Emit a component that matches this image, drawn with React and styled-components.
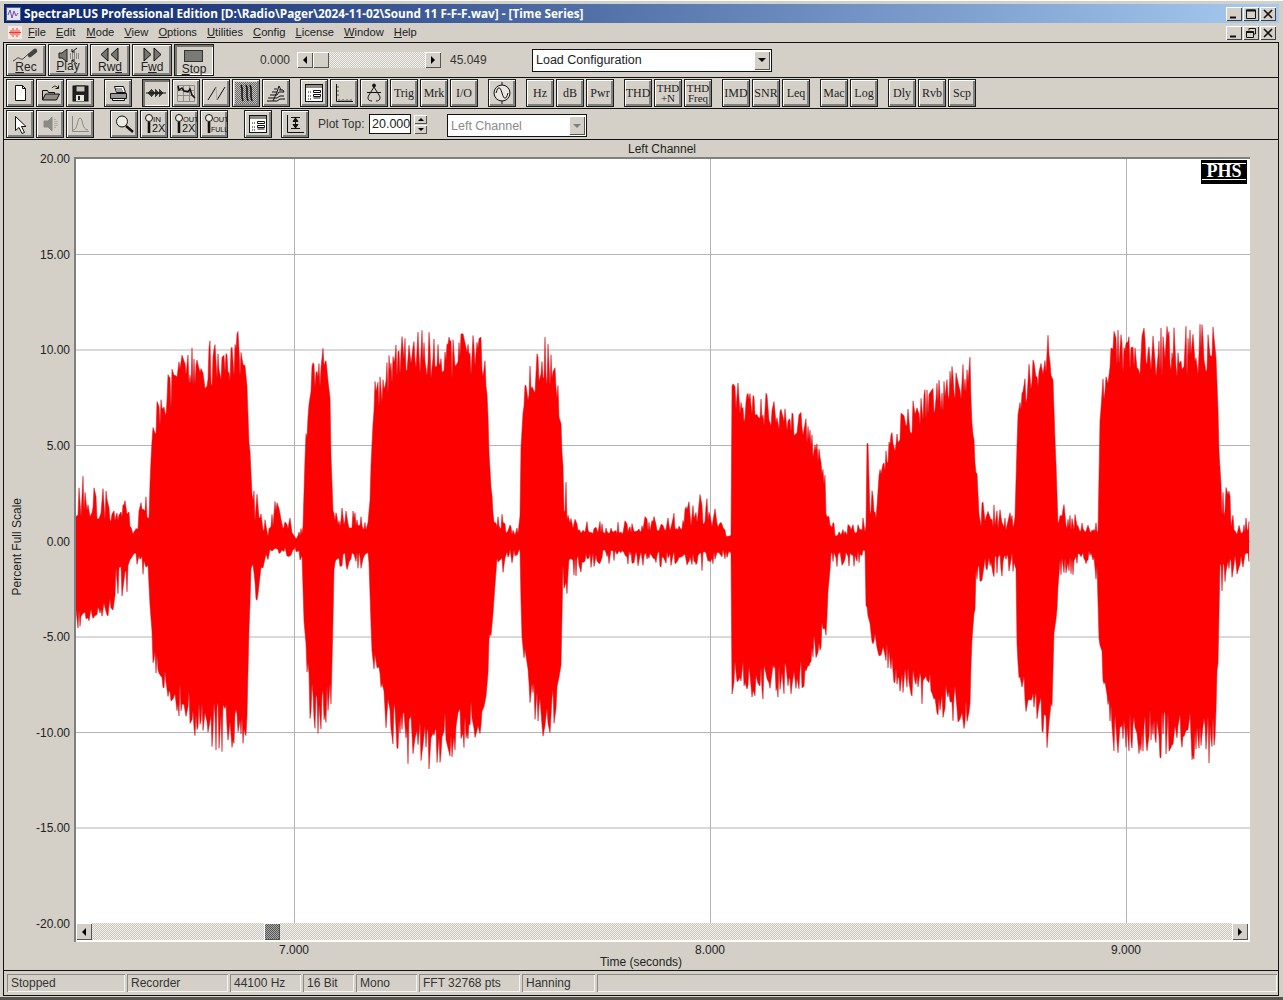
import React from "react";
import styled, { createGlobalStyle } from "styled-components";

const FACE = "#d4d0c8";
const DITHER = `repeating-conic-gradient(#f4f3f0 0 25%, #c8c4bc 0 50%) 0 0 / 2px 2px`;

const GlobalStyle = createGlobalStyle`
  html, body { margin: 0; padding: 0; background: ${FACE}; }
  body { font-family: "Liberation Sans", Arial, sans-serif; font-size: 12px; color: #111; }
`;

const Window = styled.div`
  width: 1283px;
  height: 1000px;
  box-sizing: border-box;
  padding: 4px 4px 0 3px;
  background: ${FACE};
  overflow: hidden;
  display: flex;
  flex-direction: column;
  box-shadow: inset 0 1px 0 #fff, inset 0 -3px 0 #55534e;
`;

const TitleBar = styled.div`
  height: 19px;
  margin-left: 1px;
  flex: none;
  display: flex;
  align-items: center;
  padding: 0 3px 0 2px;
  color: #fff;
  font-family: "Open Sans", sans-serif;
  font-weight: 700;
  font-size: 11.78px;
  white-space: nowrap;
  background: linear-gradient(90deg, #0a246a, #a6caf0);
`;

const TitleText = styled.span`
  margin: 0 0 2px 3px;
  flex: 1;
`;

const MenuBar = styled.div`
  height: 19px;
  flex: none;
  display: flex;
  align-items: center;
  padding: 0 3px 0 5px;
  font-size: 11.2px;
  color: #222;
`;

const MenuItem = styled.span`
  margin: 0 0 2px ${(p) => p.$gap}px;
  white-space: nowrap;
`;

const CaptionButtons = styled.div`
  display: flex;
  margin-left: auto;
  gap: ${(p) => p.$gap || 1}px;
`;

const CaptionButton = styled.div`
  width: 16px;
  height: 14px;
  box-sizing: border-box;
  background: ${FACE};
  box-shadow: inset 1px 1px 0 #fff, inset -1px -1px 0 #404040;
  display: flex;
  align-items: center;
  justify-content: center;
`;

const Frame = styled.div`
  flex: none;
  height: 954px;
  box-sizing: border-box;
  border: 1px solid #111;
  display: flex;
  flex-direction: column;
`;

const Toolbar = styled.div`
  flex: none;
  box-sizing: border-box;
  border-bottom: 1px solid #111;
  height: ${(p) => (p.$h || 30) + 1}px;
  padding-left: 2px;
  display: flex;
  align-items: center;
`;

const Group = styled.div`
  display: flex;
  gap: 2px;
  margin-left: ${(p) => p.$ml || 0}px;
`;

const Button = styled.div`
  width: ${(p) => p.$w || 28}px;
  height: ${(p) => p.$hh || 28}px;
  box-sizing: border-box;
  padding-top: ${(p) => p.$pt || 0}px;
  border: 1px solid #1c1c1c;
  background: ${FACE};
  box-shadow: ${(p) =>
    p.$pressed
      ? "inset 2px 2px 0 #77756f, inset -1px -1px 0 #fff"
      : "inset 1px 1px 0 #fff, inset -2px -2px 0 #808080"};
  display: flex;
  flex-direction: column;
  align-items: center;
  justify-content: center;
  flex: none;
  overflow: hidden;
`;

const TransportLabel = styled.span`
  font-size: 12px;
  line-height: 12px;
  margin-top: ${(p) => p.$mt ?? -1}px;
  color: #222;
`;

const SerifLabel = styled.span`
  font-family: "Liberation Serif", serif;
  font-size: ${(p) => (p.$small ? 11 : 12)}px;
  line-height: ${(p) => (p.$small ? 10 : 14)}px;
  text-align: center;
  white-space: pre-line;
  color: #222;
`;

const Readout = styled.span`
  width: ${(p) => p.$w}px;
  margin-left: ${(p) => p.$ml}px;
  text-align: ${(p) => (p.$right ? "right" : "left")};
  color: #333;
  flex: none;
`;

const HScroll = styled.div`
  width: ${(p) => p.$w}px;
  height: ${(p) => p.$h || 16}px;
  margin-left: ${(p) => p.$ml || 0}px;
  flex: none;
  display: flex;
  background: ${DITHER};
`;

const ScrollButton = styled.div`
  width: 16px;
  height: 100%;
  flex: none;
  box-sizing: border-box;
  background: ${FACE};
  box-shadow: inset 1px 1px 0 #fff, inset -1px -1px 0 #555;
  display: flex;
  align-items: center;
  justify-content: center;
`;

const Thumb = styled(ScrollButton)`
  margin-left: ${(p) => p.$ml || 0}px;
  margin-right: auto;
  background: ${(p) => (p.$dark ? "repeating-conic-gradient(#555 0 25%, #aaa 0 50%) 0 0 / 2px 2px" : FACE)};
`;

const ArrowLeft = styled.i`
  width: 0;
  height: 0;
  border: 4px solid transparent;
  border-left: 0;
  border-right: 4px solid #000;
`;

const ArrowRight = styled.i`
  width: 0;
  height: 0;
  border: 4px solid transparent;
  border-right: 0;
  border-left: 4px solid #000;
`;

const ArrowDown = styled.i`
  width: 0;
  height: 0;
  border: ${(p) => p.$size || 4}px solid transparent;
  border-bottom: 0;
  border-top: ${(p) => p.$size || 4}px solid ${(p) => p.$color || "#000"};
`;

const ArrowUp = styled(ArrowDown)`
  border-top: 0;
  border-bottom: 3px solid #000;
`;

const Combo = styled.div`
  width: ${(p) => p.$w}px;
  height: 23px;
  margin-left: ${(p) => p.$ml || 0}px;
  margin-top: ${(p) => p.$mt || 0}px;
  box-sizing: border-box;
  flex: none;
  border: 1px solid #111;
  background: #fff;
  display: flex;
  align-items: center;
  justify-content: space-between;
  padding: 1px 1px 1px 3px;
  font-size: 12.5px;
  color: ${(p) => (p.$disabled ? "#8a8a8a" : "#222")};
`;

const ComboButton = styled(ScrollButton)`
  height: 19px;
`;

const FieldLabel = styled.span`
  width: 51px;
  margin-left: 9px;
  flex: none;
  font-size: 12px;
  color: #333;
  white-space: nowrap;
`;

const NumberField = styled.div`
  width: 42px;
  height: 20px;
  flex: none;
  box-sizing: border-box;
  border: 1px solid #111;
  background: #fff;
  padding-left: 2px;
  font-size: 12.5px;
  line-height: 18px;
  color: #222;
`;

const Spinner = styled.div`
  width: 13px;
  margin-left: 3px;
  flex: none;
  display: flex;
  flex-direction: column;
  gap: 1px;
`;

const SpinButton = styled.div`
  height: 9px;
  box-sizing: border-box;
  background: ${FACE};
  box-shadow: inset 1px 1px 0 #fff, inset -1px -1px 0 #555;
  display: flex;
  align-items: center;
  justify-content: center;
`;

const Chart = styled.div`
  flex: none;
  height: 831px;
  box-sizing: border-box;
  display: grid;
  grid-template-columns: 70px 1176px 1fr;
  grid-template-rows: 17px 785px 1fr;
  border-bottom: 1px solid #111;
`;

const YAxis = styled.div`
  grid-column: 1;
  grid-row: 1 / span 3;
  height: 781px;
  padding: 11px 4px 0 7px;
  display: flex;
  justify-content: space-between;
`;

const YTitle = styled.div`
  writing-mode: vertical-rl;
  transform: rotate(180deg);
  align-self: center;
  margin-top: 11px;
  font-size: 12px;
  line-height: 12px;
  color: #222;
  white-space: nowrap;
`;

const YLabels = styled.div`
  display: flex;
  flex-direction: column;
  justify-content: space-between;
  text-align: right;
  color: #222;
  line-height: 16px;
`;

const ChartTitle = styled.div`
  grid-column: 2;
  grid-row: 1;
  text-align: center;
  line-height: 17px;
  padding-top: 1px;
  color: #222;
`;

const Plot = styled.div`
  grid-column: 2;
  grid-row: 2;
  position: relative;
  box-sizing: border-box;
  border-top: 2px solid #808080;
  border-left: 2px solid #808080;
  background: #fff;
  display: flex;
  flex-direction: column;
`;

const PlotSvg = styled.svg`
  display: block;
  width: 1174px;
  height: 764px;
  flex: none;
`;

const Badge = styled.div`
  position: absolute;
  top: 1px;
  right: 3px;
  width: 46px;
  height: 24px;
  box-sizing: border-box;
  background: #000;
  padding: 3px 1px;
`;

const BadgeText = styled.div`
  height: 17px;
  box-sizing: border-box;
  border-top: 1px solid #fff;
  border-bottom: 1px solid #fff;
  color: #fff;
  font-family: "Liberation Serif", serif;
  font-weight: 700;
  font-size: 18px;
  line-height: 15px;
  text-align: center;
`;

const XAxis = styled.div`
  grid-column: 2;
  grid-row: 3;
`;

const XTicks = styled.div`
  display: grid;
  grid-template-columns: repeat(3, 416px);
  margin-left: 12px;
`;

const XTick = styled.div`
  display: flex;
  flex-direction: column;
  align-items: center;
  color: #222;
  line-height: 14px;
  &::before {
    content: "";
    width: 1px;
    height: 2px;
    margin-top: -2px;
    margin-bottom: 1px;
    background: #000;
  }
`;

const XTitle = styled.div`
  text-align: center;
  padding-right: 42px;
  margin-top: -2px;
  line-height: 14px;
  color: #222;
`;

const StatusBar = styled.div`
  flex: 1;
  display: flex;
  gap: 2px;
  padding: 3px 1px 3px 3px;
`;

const StatusPanel = styled.div`
  width: ${(p) => (p.$w ? `${p.$w}px` : "auto")};
  flex: ${(p) => (p.$w ? "none" : 1)};
  box-sizing: border-box;
  height: 18px;
  padding-left: 4px;
  line-height: 18px;
  color: #333;
  box-shadow: inset 1px 1px 0 #8c8a84, inset -1px -1px 0 #f4f3f0;
  white-space: nowrap;
`;

const Glyph = styled.svg`
  display: block;
  flex: none;
  overflow: visible;
`;

const Icon = ({ w = 22, h = 22, children }) => (
  <Glyph width={w} height={h} viewBox={`0 0 ${w} ${h}`} fill="none" stroke="#111" strokeWidth="1">
    {children}
  </Glyph>
);

const MicIcon = () => (
  <Icon w={30} h={15}>
    <path d="M2 14c3-1 4-4 6-3s3 2 5 0 3-3 5-4" stroke="#333" />
    <path d="M19 8l5-4" stroke="#444" strokeWidth="4.500" strokeLinecap="round" />
  </Icon>
);

const PlayIcon = () => (
  <Icon w={30} h={17}>
    <path d="M6 5h3l5-4v13l-5-4H6z" fill="#77756f" stroke="#222" />
    <path d="M24 0l-5 4M19 4h3M19 4v-3M24 16l-5-4M19 12h3M19 12v3" />
    <path d="M17 6h9M17 8h10M17 10h9" stroke="#444" strokeDasharray="1 1" />
  </Icon>
);

const RwdIcon = () => (
  <Icon w={24} h={15}>
    <path d="M10 1L3 7.500 10 14zM20 1l-7 6.500 7 6.500z" fill="#77756f" />
  </Icon>
);

const FwdIcon = () => (
  <Icon w={24} h={15}>
    <path d="M4 1l7 6.500L4 14zM14 1l7 6.500L14 14z" fill="#77756f" />
  </Icon>
);

const StopIcon = () => (
  <Icon w={20} h={12}>
    <rect x="0.500" y="0.500" width="18" height="11" fill="#7c7a76" stroke="#333" />
  </Icon>
);

const NewIcon = () => (
  <Icon>
    <path d="M6.500 3.500h7l3 3v12h-10z" fill="#fff" />
    <path d="M13.500 3.500v3h3" />
  </Icon>
);

const OpenIcon = () => (
  <Icon>
    <path d="M3.500 18V8.500h5l1 2h6v2" fill="#c9c5bc" />
    <path d="M3.500 18l3-6h14l-3 6z" fill="#8f8c84" />
    <path d="M13 6c2-2.500 4-2.500 6 0M19.500 3.500v3h-3" />
  </Icon>
);

const SaveIcon = () => (
  <Icon>
    <rect x="4" y="4" width="15" height="15" fill="#222" />
    <rect x="7" y="4" width="9" height="6" fill="#c9c5bc" />
    <rect x="7" y="13" width="8" height="6" fill="#e8e6e0" stroke="none" />
    <rect x="9" y="14" width="2" height="4" fill="#222" stroke="none" />
  </Icon>
);

const PrintIcon = () => (
  <Icon>
    <path d="M7.500 4.500h9l2 6h-9z" fill="#fff" />
    <path d="M3.500 11.500h16v5h-16z" fill="#999" />
    <path d="M5.500 16.500h12v2h-12z" fill="#fff" />
    <path d="M9 7h6M10 9h6" stroke="#444" />
  </Icon>
);

// three chevrons on a centre line, heights fall away towards each tip
const chevrons = [1, 2, 3, 4, 3, 2, 1, 4, 3, 2, 1, 4, 3, 2, 1];

const WaveIcon = () => (
  <Icon>
    <path d="M1 11h20" />
    {chevrons.map((s, i) => (
      <path key={i} d={`M${3.5 + i} ${11 - s}V${11 + s}`} strokeWidth="0.8" />
    ))}
  </Icon>
);

const SpectrumIcon = () => (
  <Icon>
    <path d="M2.500 3.500h17v16h-17zM2.500 8.500h17M2.500 13.500h17M8.500 3.500v16M14.500 3.500v16" stroke="#8c8a84" />
    <path d="M3 4l1 4 3-2 2 3 4 1 2-3 2 6 3 3" strokeWidth="1.500" />
  </Icon>
);

const SawIcon = () => (
  <Icon>
    <path d="M3 18L11 5M12 18L20 5" />
    <path d="M11 5l1 13" stroke="#aaa" />
  </Icon>
);

const SonogramIcon = () => (
  <Icon>
    <defs>
      <pattern id="sonogramDots" width="2" height="2" patternUnits="userSpaceOnUse">
        <rect width="2" height="2" fill="#c4c2bc" stroke="none" />
        <rect width="1" height="1" fill="#666" stroke="none" />
        <rect x="1" y="1" width="1" height="1" fill="#666" stroke="none" />
      </pattern>
    </defs>
    <rect x="0" y="0" width="22" height="22" fill="url(#sonogramDots)" stroke="none" />
    <path d="M6 3c3 5-1 9 2 16M11 3c3 5-1 9 2 16M15 3c3 5-1 9 2 16" strokeWidth="1.500" />
  </Icon>
);

const WaterfallIcon = () => (
  <Icon>
    <path d="M2 19h10l3-2h5M3 16h9l3-2h4M5 13h7l2-3h5l-1-2h-4M7 10h5M9 7h3" />
    <path d="M12 10l2-6 2 4M8 19l4-9" />
  </Icon>
);

const SettingsIcon = () => (
  <Icon>
    <rect x="2.500" y="2.500" width="17" height="17" fill="#fff" />
    <rect x="3" y="3" width="16" height="3" fill="#8c8a84" stroke="none" />
    <path d="M10.500 8.500h7v2h-7zM10.500 12.500h7v2h-7zM10.500 16h7" fill="#fff" />
    <path d="M5 10h3M5 14h3M5 17h3" strokeDasharray="1 1" />
  </Icon>
);

const AxisIcon = () => (
  <Icon>
    <path d="M3.500 2v17.500H20" />
    <path d="M6 17v2M8 18v2M10 17v2M12 18v2M14 17v2M16 18v2M18 17v2M4 5h2M4 9h2M4 13h2" stroke="#333" strokeWidth="0.8" />
  </Icon>
);

const CompassIcon = () => (
  <Icon>
    <circle cx="11" cy="3.500" r="1.500" fill="#111" />
    <path d="M11 5L6 13c-2 3-1 6 3 6M11 5l5 8c2 3 1 6-3 6M4 10.500h14" />
  </Icon>
);

const ScopeIcon = () => (
  <Icon>
    <circle cx="11" cy="11" r="8" fill="#e8e6e0" />
    <path d="M5 11c2-7 4-7 6 0s4 7 6 0M11 0v3M11 19v3" />
  </Icon>
);

const PointerIcon = () => (
  <Icon>
    <path d="M6.500 3.500v14l3.500-3 3 6 2.500-1-3-6h4.500z" fill="#fff" />
  </Icon>
);

const MuteIcon = () => (
  <Icon>
    <path d="M5 8h4l4-4v14l-4-4H5z" fill="#8c8a84" stroke="#8c8a84" />
    <path d="M16 6v10M18 8v6" stroke="#8c8a84" strokeDasharray="1 1" />
  </Icon>
);

const PeakIcon = () => (
  <Icon>
    <path d="M3.500 3v15.500H20" stroke="#8c8a84" />
    <path d="M4 17c5 0 4-12 7-12s2 12 8 12" stroke="#8c8a84" />
  </Icon>
);

const LoupeIcon = () => (
  <Icon>
    <circle cx="9" cy="8.500" r="5.500" fill="#ecebe6" />
    <path d="M13 13l7 6" strokeWidth="2.400" />
  </Icon>
);

const ZoomIcon = ({ top, bottom, small }) => (
  <Icon>
    <circle cx="6" cy="5" r="3.500" fill="#ecebe6" />
    <path d="M6 9v11" strokeWidth="2.600" />
    <text x="10" y="9" fontFamily="Liberation Sans, sans-serif" fontSize={top.length > 2 ? 7.5 : 8} fill="#111" stroke="none">
      {top}
    </text>
    <text x={small ? 8 : 9} y="19" fontFamily="Liberation Sans, sans-serif" fontSize={small ? 7 : 11} fill="#111" stroke="none">
      {bottom}
    </text>
  </Icon>
);

const RangeIcon = () => (
  <Icon>
    <path d="M3.500 2v17.500H20" />
    <path d="M7 4.500h9M7 15.500h9M11.500 5v10" />
    <path d="M11.500 5l-2.500 3.500h5zM11.500 15l-2.500-3.500h5z" fill="#111" />
  </Icon>
);

const AppIcon = () => (
  <Icon w={15} h={14}>
    <rect x="0.500" y="0.500" width="14" height="13" fill="#dfe4f2" stroke="#55608a" />
    <path d="M2 8l2-5 2 8 2-7 2 5 2-3" stroke="#7b4aa0" />
  </Icon>
);

const DocIcon = () => (
  <Icon w={14} h={13}>
    <rect x="0" y="0" width="14" height="13" fill="#f6e8e4" stroke="none" />
    <path d="M1 6.500h12M3 4v5M5 2v9M7 4v5M9 2v9M11 4v5" stroke="#ef3a2c" />
  </Icon>
);

const MinGlyph = () => (
  <Icon w={10} h={10}>
    <path d="M1 8.500h6" strokeWidth="2" />
  </Icon>
);

const MaxGlyph = () => (
  <Icon w={10} h={10}>
    <path d="M0.500 1h9v8.500h-9z" />
    <path d="M0.500 1.500h9" strokeWidth="2" />
  </Icon>
);

const RestoreGlyph = () => (
  <Icon w={10} h={10}>
    <path d="M3 2.500V0.500h6.500v5.500H7.500" />
    <path d="M0.500 3.500h7v6h-7z" fill={FACE} />
    <path d="M0.500 4h7" strokeWidth="2" />
  </Icon>
);

const CloseGlyph = () => (
  <Icon w={10} h={10}>
    <path d="M1 1l8 8M9 1l-8 8" strokeWidth="1.600" />
  </Icon>
);

// seeded noise, so the trace is the same on every load
const makeRandom = (seed) => () => {
  seed = (seed + 0x6d2b79f5) | 0;
  let t = Math.imul(seed ^ (seed >>> 15), 1 | seed);
  t = (t + Math.imul(t ^ (t >>> 7), 61 | t)) ^ t;
  return ((t ^ (t >>> 14)) >>> 0) / 4294967296;
};

const UPPER = [
  [76, 3.6], [100, 3.2], [128, 2.7], [133, 1], [140, 2.1], [149, 2.5], [151, 5.4], [155, 7.1], [165, 8.4], [175, 9.7],
  [190, 10.3], [220, 10.7], [240, 11.1], [247, 9.7], [250, 5], [252, 3.2], [258, 2.7], [268, 0.7], [272, 2.2], [290, 1.7],
  [296, 0.4], [303, 1.2], [305, 5.4], [310, 8.9], [318, 10.2], [329, 10.5], [331, 5], [335, 2.2], [345, 2], [368, 1.6],
  [372, 5.4], [375, 8.5], [385, 9.9], [400, 11.2], [480, 10.9], [487, 9.6], [490, 3.4], [500, 1.6], [510, 0.9], [519, 0.9],
  [521, 6.4], [525, 8.6], [535, 10.2], [545, 10.8], [558, 9.6], [563, 4], [570, 2.2], [580, 1.2], [620, 1.1], [680, 1.7],
  [700, 2.6], [722, 1.8], [725, 0.7], [731, 0.8], [732, 8.4], [760, 7.9], [800, 7.1], [820, 4.9], [830, 2.1], [835, 0.7],
  [860, 1.2], [866, 1.4], [867, 6], [871, 2.6], [885, 4.8], [900, 6.8], [930, 8.4], [970, 9.9], [973, 6], [980, 2.2],
  [1010, 1.6], [1015, 2.2], [1018, 7.4], [1030, 9.9], [1050, 11], [1054, 8], [1058, 2.6], [1070, 1.6], [1090, 1.2],
  [1098, 1.4], [1100, 7.4], [1110, 11.1], [1215, 11.4], [1220, 4], [1228, 3], [1235, 0.9], [1249, 1.5],
];

const LOWER = [
  [76, 4.6], [100, 4.1], [128, 3.5], [133, 1.3], [149, 2.8], [151, 6], [165, 8.7], [190, 10.1], [220, 11.1], [247, 10.6],
  [250, 3.4], [262, 2.9], [268, 1.1], [296, 0.7], [303, 2.2], [305, 6.4], [310, 9.3], [320, 10.6], [331, 8.6], [334, 2.6],
  [345, 1.6], [368, 1.6], [372, 6.4], [385, 9.9], [400, 11.5], [430, 12], [480, 10.6], [488, 7.4], [495, 2.6], [510, 1.1],
  [520, 1.2], [522, 6.4], [535, 9.9], [545, 10.7], [560, 9.2], [563, 3], [575, 2.2], [600, 1.2], [700, 1.6], [722, 1.1],
  [731, 1.1], [732, 8], [760, 8.4], [800, 8.1], [826, 5], [830, 1.6], [865, 1.2], [866, 3.4], [870, 5.6], [880, 6.4],
  [900, 8], [940, 9.4], [970, 10.2], [973, 4], [985, 2.2], [1015, 1.6], [1018, 7.4], [1030, 9.9], [1050, 11.4], [1054, 6],
  [1060, 2.2], [1095, 1.1], [1100, 6.4], [1110, 11.1], [1215, 11.7], [1220, 3.4], [1230, 2.2], [1249, 1.6],
];

const interp = (table, x) => {
  for (let i = 1; i < table.length; i++) {
    if (x <= table[i][0]) {
      const [x0, a0] = table[i - 1];
      const [x1, a1] = table[i];
      return a0 + ((a1 - a0) * (x - x0)) / (x1 - x0);
    }
  }
  return table[table.length - 1][1];
};

const ZERO_Y = 541.5;
const PX_PER_PCT = 19.125;

// one edge of the trace: uneven steps give spikes a few pixels wide
const traceEdge = (table, sign, rnd) => {
  const points = [];
  let x = 76;
  while (x < 1249) {
    const amp = interp(table, x);
    const quiet = amp < 3.8;
    const r = rnd();
    const level = quiet ? 0.36 + 0.64 * r * r : 0.76 + 0.24 * r;
    points.push(`${x} ${(ZERO_Y + sign * amp * level * PX_PER_PCT).toFixed(1)}`);
    x += rnd() < 0.75 ? 1 : 2;
  }
  points.push(`1249 ${ZERO_Y + sign * 20}`);
  return points;
};

const buildTrace = () => {
  const rnd = makeRandom(20241102);
  const top = traceEdge(UPPER, -1, rnd);
  const bottom = traceEdge(LOWER, 1, rnd).reverse();
  return `M${top.join("L")}L${bottom.join("L")}Z`;
};

const TRACE = buildTrace();
const GRID_Y = [254.5, 350, 445.5, 541.5, 637, 732.5, 828];
const GRID_X = [294, 710, 1126];
const Y_LABELS = ["20.00", "15.00", "10.00", "5.00", "0.00", "-5.00", "-10.00", "-15.00", "-20.00"];

const Waveform = () => (
  <PlotSvg viewBox="76 159 1174 764">
    {GRID_Y.map((y) => (
      <line key={y} x1="76" x2="1250" y1={y} y2={y} stroke="#b4b4b4" />
    ))}
    {GRID_X.map((x) => (
      <line key={x} x1={x + 0.5} x2={x + 0.5} y1="159" y2="924" stroke="#b4b4b4" />
    ))}
    <path d={TRACE} fill="#ff0000" stroke="#d01018" strokeWidth="0.5" strokeLinejoin="bevel" />
  </PlotSvg>
);

const MENU = [
  ["F", "ile", 6],
  ["E", "dit", 10],
  ["M", "ode", 11],
  ["V", "iew", 10],
  ["O", "ptions", 10],
  ["U", "tilities", 10],
  ["C", "onfig", 10],
  ["L", "icense", 10],
  ["W", "indow", 10],
  ["H", "elp", 10],
];

const TextButton = ({ children, small }) => (
  <Button>
    <SerifLabel $small={small}>{children}</SerifLabel>
  </Button>
);

export default function App() {
  return (
    <Window>
      <GlobalStyle />
      <TitleBar>
        <AppIcon />
        <TitleText>SpectraPLUS Professional Edition [D:\Radio\Pager\2024-11-02\Sound 11 F-F-F.wav] - [Time Series]</TitleText>
        <CaptionButtons>
          <CaptionButton><MinGlyph /></CaptionButton>
          <CaptionButton><MaxGlyph /></CaptionButton>
          <CaptionButton><CloseGlyph /></CaptionButton>
        </CaptionButtons>
      </TitleBar>
      <MenuBar>
        <DocIcon />
        {MENU.map(([key, rest, gap]) => (
          <MenuItem key={key} $gap={gap}>
            <u>{key}</u>
            {rest}
          </MenuItem>
        ))}
        <CaptionButtons>
          <CaptionButton><MinGlyph /></CaptionButton>
          <CaptionButton><RestoreGlyph /></CaptionButton>
          <CaptionButton><CloseGlyph /></CaptionButton>
        </CaptionButtons>
      </MenuBar>
      <Frame>
        <Toolbar $h={34}>
          <Group>
            <Button $w={40} $hh={32}>
              <MicIcon />
              <TransportLabel><u>R</u>ec</TransportLabel>
            </Button>
            <Button $w={40} $hh={32}>
              <PlayIcon />
              <TransportLabel $mt={-5}><u>P</u>lay</TransportLabel>
            </Button>
            <Button $w={40} $hh={32}>
              <RwdIcon />
              <TransportLabel>Rw<u>d</u></TransportLabel>
            </Button>
            <Button $w={40} $hh={32}>
              <FwdIcon />
              <TransportLabel>F<u>w</u>d</TransportLabel>
            </Button>
            <Button $w={40} $hh={32} $pt={4} $pressed>
              <StopIcon />
              <TransportLabel $mt={1}><u>S</u>top</TransportLabel>
            </Button>
          </Group>
          <Readout $w={60} $ml={16} $right>0.000</Readout>
          <HScroll $w={144} $ml={7}>
            <ScrollButton><ArrowLeft /></ScrollButton>
            <Thumb />
            <ScrollButton><ArrowRight /></ScrollButton>
          </HScroll>
          <Readout $w={82} $ml={9}>45.049</Readout>
          <Combo $w={240}>
            Load Configuration
            <ComboButton><ArrowDown /></ComboButton>
          </Combo>
        </Toolbar>
        <Toolbar>
          <Group>
            <Button><NewIcon /></Button>
            <Button><OpenIcon /></Button>
            <Button><SaveIcon /></Button>
          </Group>
          <Group $ml={10}>
            <Button><PrintIcon /></Button>
          </Group>
          <Group $ml={10}>
            <Button $pressed><WaveIcon /></Button>
            <Button><SpectrumIcon /></Button>
            <Button><SawIcon /></Button>
            <Button><SonogramIcon /></Button>
            <Button><WaterfallIcon /></Button>
          </Group>
          <Group $ml={10}>
            <Button><SettingsIcon /></Button>
            <Button><AxisIcon /></Button>
            <Button><CompassIcon /></Button>
            <TextButton>Trig</TextButton>
            <TextButton>Mrk</TextButton>
            <TextButton>I/O</TextButton>
          </Group>
          <Group $ml={10}>
            <Button><ScopeIcon /></Button>
          </Group>
          <Group $ml={10}>
            <TextButton>Hz</TextButton>
            <TextButton>dB</TextButton>
            <TextButton>Pwr</TextButton>
          </Group>
          <Group $ml={10}>
            <TextButton>THD</TextButton>
            <TextButton small>{"THD\n+N"}</TextButton>
            <TextButton small>{"THD\nFreq"}</TextButton>
          </Group>
          <Group $ml={10}>
            <TextButton>IMD</TextButton>
            <TextButton>SNR</TextButton>
            <TextButton>Leq</TextButton>
          </Group>
          <Group $ml={10}>
            <TextButton>Mac</TextButton>
            <TextButton>Log</TextButton>
          </Group>
          <Group $ml={10}>
            <TextButton>Dly</TextButton>
            <TextButton>Rvb</TextButton>
            <TextButton>Scp</TextButton>
          </Group>
        </Toolbar>
        <Toolbar>
          <Group>
            <Button><PointerIcon /></Button>
            <Button><MuteIcon /></Button>
            <Button><PeakIcon /></Button>
          </Group>
          <Group $ml={16}>
            <Button><LoupeIcon /></Button>
            <Button><ZoomIcon top="IN" bottom="2X" /></Button>
            <Button><ZoomIcon top="OUT" bottom="2X" /></Button>
            <Button><ZoomIcon top="OUT" bottom="FULL" small /></Button>
          </Group>
          <Group $ml={16}>
            <Button><SettingsIcon /></Button>
          </Group>
          <Group $ml={9}>
            <Button><RangeIcon /></Button>
          </Group>
          <FieldLabel>Plot Top:</FieldLabel>
          <NumberField>20.000</NumberField>
          <Spinner>
            <SpinButton><ArrowUp $size={3} /></SpinButton>
            <SpinButton><ArrowDown $size={3} /></SpinButton>
          </Spinner>
          <Combo $w={140} $ml={20} $mt={3} $disabled>
            Left Channel
            <ComboButton><ArrowDown $color="#808080" /></ComboButton>
          </Combo>
        </Toolbar>
        <Chart>
          <YAxis>
            <YTitle>Percent Full Scale</YTitle>
            <YLabels>
              {Y_LABELS.map((label) => (
                <span key={label}>{label}</span>
              ))}
            </YLabels>
          </YAxis>
          <ChartTitle>Left Channel</ChartTitle>
          <Plot>
            <Waveform />
            <HScroll $w={1172} $h={17}>
              <ScrollButton><ArrowLeft /></ScrollButton>
              <Thumb $ml={172} $dark />
              <ScrollButton><ArrowRight /></ScrollButton>
            </HScroll>
            <Badge>
              <BadgeText>PHS</BadgeText>
            </Badge>
          </Plot>
          <XAxis>
            <XTicks>
              <XTick>7.000</XTick>
              <XTick>8.000</XTick>
              <XTick>9.000</XTick>
            </XTicks>
            <XTitle>Time (seconds)</XTitle>
          </XAxis>
        </Chart>
        <StatusBar>
          <StatusPanel $w={118}>Stopped</StatusPanel>
          <StatusPanel $w={101}>Recorder</StatusPanel>
          <StatusPanel $w={71}>44100 Hz</StatusPanel>
          <StatusPanel $w={51}>16 Bit</StatusPanel>
          <StatusPanel $w={61}>Mono</StatusPanel>
          <StatusPanel $w={101}>FFT 32768 pts</StatusPanel>
          <StatusPanel $w={73}>Hanning</StatusPanel>
          <StatusPanel />
        </StatusBar>
      </Frame>
    </Window>
  );
}
